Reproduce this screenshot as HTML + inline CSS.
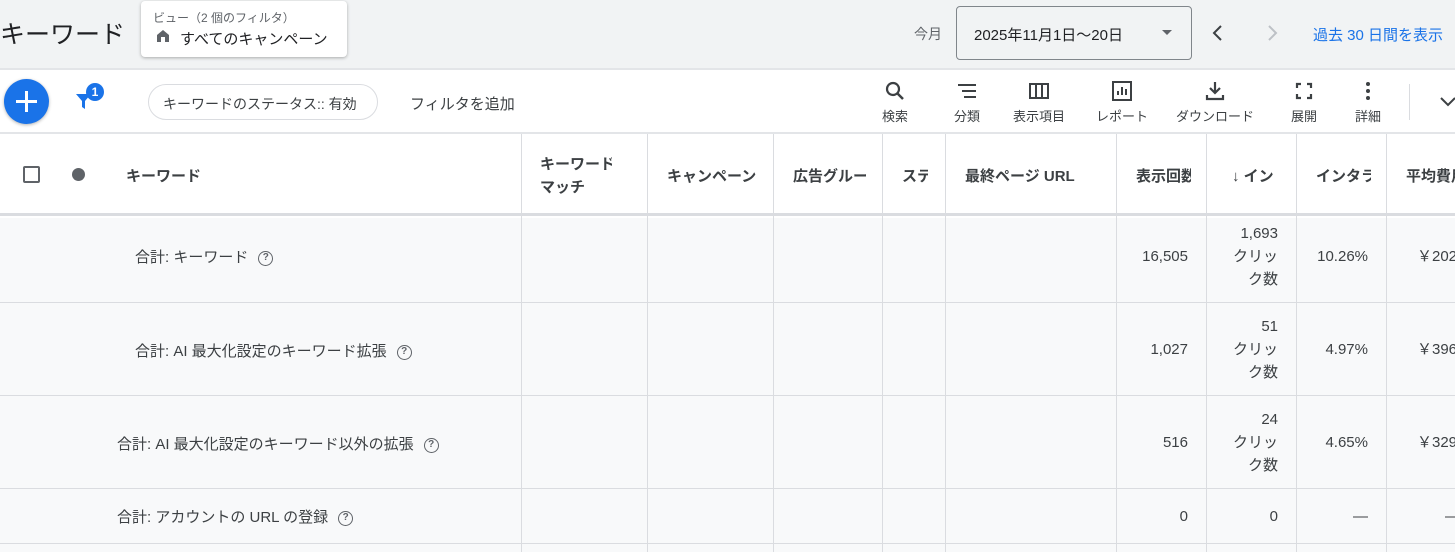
<!DOCTYPE html>
<html><head><meta charset="utf-8"><style>
*{box-sizing:border-box;margin:0;padding:0}
html,body{width:1455px;height:552px;overflow:hidden}
body{background:#fff;font-family:"Liberation Sans","Noto Sans CJK JP",sans-serif;color:#3c4043;position:relative}
.a{position:absolute;white-space:nowrap}
.top{position:absolute;left:0;top:0;width:1455px;height:70px;background:#f1f3f4;border-bottom:2px solid #e3e5e8}
.tb{position:absolute;left:0;top:70px;width:1455px;height:64px;background:#fff;border-bottom:2px solid #e3e5e8}
.ti{position:absolute;top:80px;text-align:center;font-size:13px;color:#3c4043}
.ti svg{display:block;margin:0 auto 4px}
.hdr{position:absolute;top:134px;left:0;width:1455px;height:82px;background:#fff;border-bottom:3px solid #dadce0}
.row{position:absolute;left:0;width:1455px;background:#f8f9fa;border-bottom:1px solid #dadce0}
.vl{position:absolute;top:134px;height:418px;width:1px;background:#dadce0}
.h{position:absolute;font-size:15px;font-weight:bold;color:#3c4043;white-space:nowrap;overflow:hidden}
.c{position:absolute;font-size:15px;color:#3c4043;text-align:right;line-height:23px}
.q{display:inline-block;width:15px;height:15px;border:1.5px solid #5f6368;border-radius:50%;font-size:10px;text-align:center;line-height:12px;font-weight:bold;margin-left:10px;vertical-align:2px;color:#5f6368}
</style></head><body>
<div class="top"></div>
<div class="a" style="left:0;top:15px;font-size:25px;color:#202124">キーワード</div>
<div class="a" style="left:141px;top:1px;width:206px;height:56px;background:#fff;border-radius:4px;box-shadow:0 1px 3px rgba(0,0,0,.3)"></div>
<div class="a" style="left:153px;top:9px;font-size:12px;color:#5f6368">ビュー（2 個のフィルタ）</div>
<svg class="a" style="left:155px;top:28px" width="16" height="16" viewBox="0 0 16 16"><path d="M2 7L8 2l6 5v7H2z" fill="#5f6368"/><rect x="6" y="9" width="4" height="5" fill="#fff"/></svg>
<div class="a" style="left:180px;top:28px;font-size:15px;color:#202124">すべてのキャンペーン</div>
<div class="a" style="left:914px;top:24px;font-size:14px;color:#5f6368">今月</div>
<div class="a" style="left:956px;top:6px;width:236px;height:54px;border:1px solid #80868b;border-radius:4px"></div>
<div class="a" style="left:974px;top:24px;font-size:15px;color:#202124">2025年11月1日〜20日</div>
<div class="a" style="left:1162px;top:30px;width:0;height:0;border-left:5px solid transparent;border-right:5px solid transparent;border-top:5px solid #5f6368"></div>
<svg class="a" style="left:1210px;top:23px" width="16" height="20"><path d="M11 3L4 10l7 7" stroke="#3c4043" stroke-width="2" fill="none"/></svg>
<svg class="a" style="left:1264px;top:23px" width="16" height="20"><path d="M5 3l7 7-7 7" stroke="#bdc1c6" stroke-width="2" fill="none"/></svg>
<div class="a" style="left:1313px;top:24px;font-size:15px;color:#1a73e8">過去 30 日間を表示</div>

<div class="tb"></div>
<div class="a" style="left:4px;top:79px;width:45px;height:45px;border-radius:50%;background:#1a73e8;box-shadow:0 1px 3px rgba(0,0,0,.3)"></div>
<div class="a" style="left:16px;top:100px;width:21px;height:3px;background:#fff"></div>
<div class="a" style="left:25px;top:91px;width:3px;height:21px;background:#fff"></div>
<svg class="a" style="left:74px;top:92px" width="20" height="20"><path d="M2 2h15l-6 7v8l-3-2V9z" fill="#1a73e8"/></svg>
<div class="a" style="left:86px;top:83px;width:18px;height:18px;border-radius:50%;background:#1a73e8;color:#fff;font-size:12px;font-weight:bold;text-align:center;line-height:18px">1</div>
<div class="a" style="left:148px;top:84px;width:230px;height:36px;border:1px solid #dadce0;border-radius:18px"></div>
<div class="a" style="left:163px;top:94px;font-size:14px;color:#3c4043">キーワードのステータス:: 有効</div>
<div class="a" style="left:410px;top:93px;font-size:15px;color:#3c4043">フィルタを追加</div>

<div class="ti" style="left:882px"><svg width="22" height="22"><circle cx="9" cy="9" r="6" stroke="#3c4043" stroke-width="2.2" fill="none"/><path d="M13 13l6 6" stroke="#3c4043" stroke-width="2.5"/></svg>検索</div>
<div class="ti" style="left:954px"><svg width="24" height="22"><path d="M3 5h18M7 11h14M9 17h12" stroke="#3c4043" stroke-width="2"/></svg>分類</div>
<div class="ti" style="left:1013px"><svg width="24" height="22"><rect x="3" y="4" width="18" height="14" stroke="#3c4043" stroke-width="2" fill="none"/><path d="M9 4v14M15 4v14" stroke="#3c4043" stroke-width="2"/></svg>表示項目</div>
<div class="ti" style="left:1096px"><svg width="24" height="22"><rect x="3" y="2" width="18" height="18" stroke="#3c4043" stroke-width="2" fill="none"/><path d="M8 15v-4M12 15V7M16 15v-6" stroke="#3c4043" stroke-width="2"/></svg>レポート</div>
<div class="ti" style="left:1176px"><svg width="24" height="22"><path d="M12 2v11M7 8l5 5 5-5M4 15v4h16v-4" stroke="#3c4043" stroke-width="2.2" fill="none"/></svg>ダウンロード</div>
<div class="ti" style="left:1291px"><svg width="24" height="22"><path d="M5 8V4h4M15 4h4v4M19 14v4h-4M9 18H5v-4" stroke="#3c4043" stroke-width="2.2" fill="none"/></svg>展開</div>
<div class="ti" style="left:1355px"><svg width="24" height="22"><circle cx="12" cy="4" r="2" fill="#3c4043"/><circle cx="12" cy="11" r="2" fill="#3c4043"/><circle cx="12" cy="18" r="2" fill="#3c4043"/></svg>詳細</div>
<div class="a" style="left:1409px;top:84px;width:1px;height:36px;background:#dadce0"></div>
<svg class="a" style="left:1440px;top:96px" width="15" height="12"><path d="M1 2l7 7 7-7" stroke="#3c4043" stroke-width="2" fill="none"/></svg>

<div class="hdr"></div>
<div class="row" style="top:218px;height:85px"></div>
<div class="row" style="top:303px;height:93px"></div>
<div class="row" style="top:396px;height:93px"></div>
<div class="row" style="top:489px;height:55px"></div>
<div class="row" style="top:544px;height:8px;border:0"></div>
<div class="vl" style="left:521px"></div><div class="vl" style="left:647px"></div><div class="vl" style="left:773px"></div><div class="vl" style="left:882px"></div><div class="vl" style="left:945px"></div><div class="vl" style="left:1116px"></div><div class="vl" style="left:1206px"></div><div class="vl" style="left:1296px"></div><div class="vl" style="left:1386px"></div>

<div class="a" style="left:23px;top:166px;width:17px;height:17px;border:2px solid #5f6368;border-radius:2px"></div>
<div class="a" style="left:72px;top:168px;width:13px;height:13px;border-radius:50%;background:#5f6368"></div>
<div class="h" style="left:126px;top:165px">キーワード</div>
<div class="h" style="left:540px;top:153px;width:72px;line-height:23px">キーワード<br>マッチ</div>
<div class="h" style="left:667px;top:165px;width:90px">キャンペーン</div>
<div class="h" style="left:793px;top:165px;width:73px">広告グルー</div>
<div class="h" style="left:902px;top:165px;width:26px">ステ</div>
<div class="h" style="left:965px;top:165px">最終ページ URL</div>
<div class="h" style="left:1136px;top:165px;width:55px">表示回数</div>
<div class="h" style="left:1232px;top:165px;width:48px">↓ イン</div>
<div class="h" style="left:1316px;top:165px;width:55px">インタラ</div>
<div class="h" style="left:1406px;top:165px;width:49px">平均費用</div>

<div class="a" style="left:135px;top:246px;font-size:15px">合計: キーワード<span class="q">?</span></div>
<div class="a" style="left:135px;top:340px;font-size:15px">合計: AI 最大化設定のキーワード拡張<span class="q">?</span></div>
<div class="a" style="left:117px;top:433px;font-size:15px">合計: AI 最大化設定のキーワード以外の拡張<span class="q">?</span></div>
<div class="a" style="left:117px;top:506px;font-size:15px">合計: アカウントの URL の登録<span class="q">?</span></div>

<div class="c" style="right:267px;top:245px">16,505</div>
<div class="c" style="right:177px;top:222px">1,693<br>クリッ<br>ク数</div>
<div class="c" style="right:87px;top:245px">10.26%</div>
<div class="a" style="left:1417px;top:245px;font-size:15px;line-height:23px">￥202</div>

<div class="c" style="right:267px;top:338px">1,027</div>
<div class="c" style="right:177px;top:315px">51<br>クリッ<br>ク数</div>
<div class="c" style="right:87px;top:338px">4.97%</div>
<div class="a" style="left:1417px;top:338px;font-size:15px;line-height:23px">￥396</div>

<div class="c" style="right:267px;top:431px">516</div>
<div class="c" style="right:177px;top:408px">24<br>クリッ<br>ク数</div>
<div class="c" style="right:87px;top:431px">4.65%</div>
<div class="a" style="left:1417px;top:431px;font-size:15px;line-height:23px">￥329</div>

<div class="c" style="right:267px;top:505px">0</div>
<div class="c" style="right:177px;top:505px">0</div>
<div class="c" style="right:87px;top:505px">—</div>
<div class="a" style="left:1445px;top:505px;font-size:15px;line-height:23px">—</div>
</body></html>
